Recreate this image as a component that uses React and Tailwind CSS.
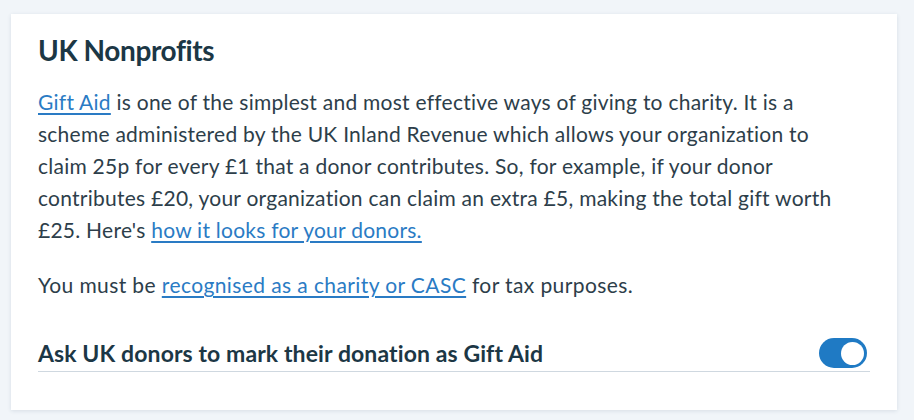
import React, { useState } from "react";

const linkCls = "text-[#2a7bc4] underline underline-offset-[3px] decoration-[1.5px]";

const App = () => {
  const [giftAid, setGiftAid] = useState(true);

  return (
    <div className="min-h-screen w-full bg-[#f1f5f9] pt-[14px] pl-[11px] font-['Lato','Open_Sans',sans-serif]">
      <div className="w-[886px] h-[396px] bg-white shadow-[0_1px_4px_rgba(30,60,90,0.12)] px-[27px] pt-[16px]">
        <h2 className="text-[28px] leading-[40px] font-bold text-[#1c3745] tracking-[-0.4px]">UK Nonprofits</h2>

        <p className="mt-[16px] text-[21px] leading-[32px] tracking-[0.25px] text-[#2d3e4a]">
          <a href="#" className={linkCls}>Gift Aid</a> is one of the simplest and most effective ways of giving to charity. It is a
          <br />
          scheme administered by the UK Inland Revenue which allows your organization to
          <br />
          claim 25p for every £1 that a donor contributes. So, for example, if your donor
          <br />
          contributes £20, your organization can claim an extra £5, making the total gift worth
          <br />
          £25. Here's <a href="#" className={linkCls}>how it looks for your donors.</a>
        </p>

        <p className="mt-[23px] text-[21px] leading-[32px] tracking-[0.4px] text-[#2d3e4a]">
          You must be <a href="#" className={linkCls}>recognised as a charity or CASC</a> for tax purposes.
        </p>

        <div className="mt-[37px] w-[832px] flex items-center justify-between border-b border-[#cfd8e0] pb-[3px]">
          <span className="text-[23px] leading-[28px] font-bold text-[#1c3745] tracking-[0.1px]">
            Ask UK donors to mark their donation as Gift Aid
          </span>
          <button
            type="button"
            onClick={() => setGiftAid(!giftAid)}
            className={`mr-[3px] w-[48px] h-[30px] rounded-full flex items-center px-[3px] ${
              giftAid ? "bg-[#1f7ac4] justify-end" : "bg-[#c5ced6] justify-start"
            }`}
          >
            <span className="w-[23px] h-[23px] rounded-full bg-white block" />
          </button>
        </div>
      </div>
    </div>
  );
};

export default App;
